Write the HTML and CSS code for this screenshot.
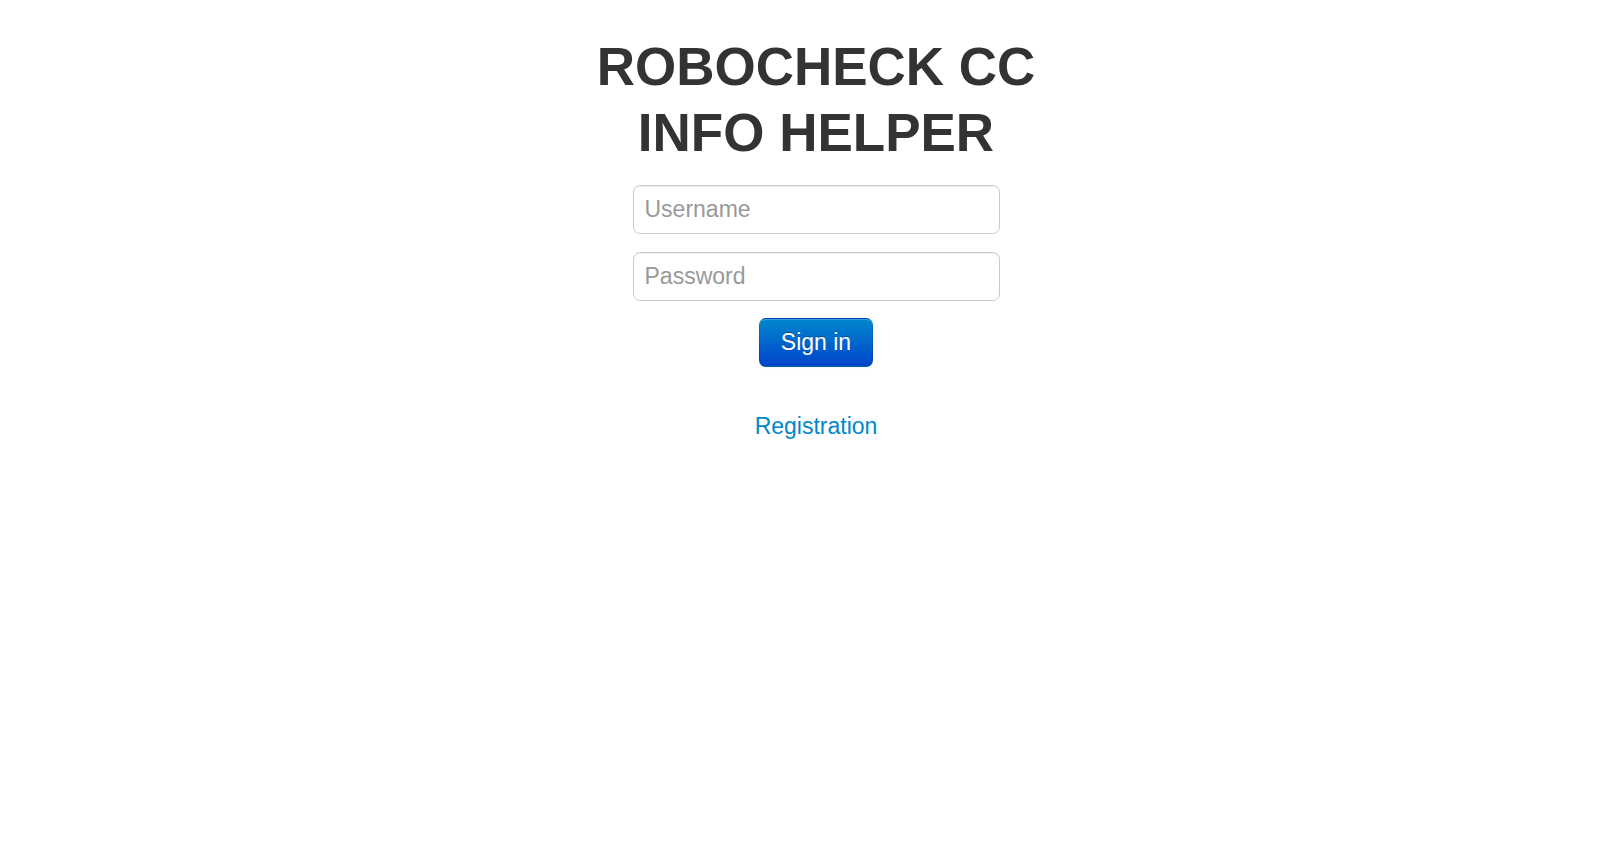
FILE: index.html
```html
<!DOCTYPE html>
<html lang="en">
<head>
<meta charset="UTF-8">
<meta name="viewport" content="width=device-width, initial-scale=1.0">
<title>Robocheck CC Info Helper</title>
<link rel="stylesheet" href="styles.css">
</head>
<body>
<div class="contenedor">
    <form class="login" id="formLogin">
        <h2>ROBOCHECK CC<br>INFO HELPER</h2>
        <input type="text" id="username" placeholder="Username">
        <input type="password" id="password" placeholder="Password">
        <button type="submit">Sign in</button>
        <a href="#" class="registro">Registration</a>
    </form>
</div>
</body>
</html>
```

FILE: styles.css
```css
body {
    font-family: "Liberation Sans", Arial, sans-serif;
    margin: 0;
    background-color: #fff;
    color: #333;
}
.contenedor {
    display: flex;
    justify-content: center;
    padding-left: 32px;
    padding-top: 34px;
}
.login {
    display: flex;
    flex-direction: column;
    align-items: center;
    width: 520px;
}
h2 {
    margin: 0 0 19px;
    font-size: 53px;
    line-height: 66px;
    font-weight: bold;
    text-align: center;
    white-space: nowrap;
    color: #333;
}
input[type="text"], input[type="password"] {
    box-sizing: border-box;
    width: 367px;
    height: 49px;
    padding: 7px 11px;
    margin-bottom: 18px;
    border: 1px solid #ccc;
    border-radius: 7px;
    box-shadow: inset 0 1px 1px rgba(0,0,0,0.075);
    font-family: inherit;
    font-size: 23px;
    color: #555;
    outline: none;
}
input::placeholder {
    color: #999;
}
button {
    box-sizing: border-box;
    width: 114px;
    height: 49px;
    margin-top: -1px;
    padding: 0;
    background-color: #0055cc;
    background-image: linear-gradient(to bottom, #0088cc, #0044cc);
    color: #fff;
    border: 1px solid rgba(0,0,0,0.1);
    border-bottom-color: rgba(0,0,0,0.25);
    border-radius: 7px;
    box-shadow: inset 0 1px 0 rgba(255,255,255,0.2), 0 1px 2px rgba(0,0,0,0.05);
    text-shadow: 0 -1px 0 rgba(0,0,0,0.25);
    font-family: inherit;
    font-size: 23px;
    cursor: pointer;
}
.registro {
    margin-top: 43px;
    font-size: 23px;
    line-height: 33px;
    color: #0088cc;
    text-decoration: none;
}
```
